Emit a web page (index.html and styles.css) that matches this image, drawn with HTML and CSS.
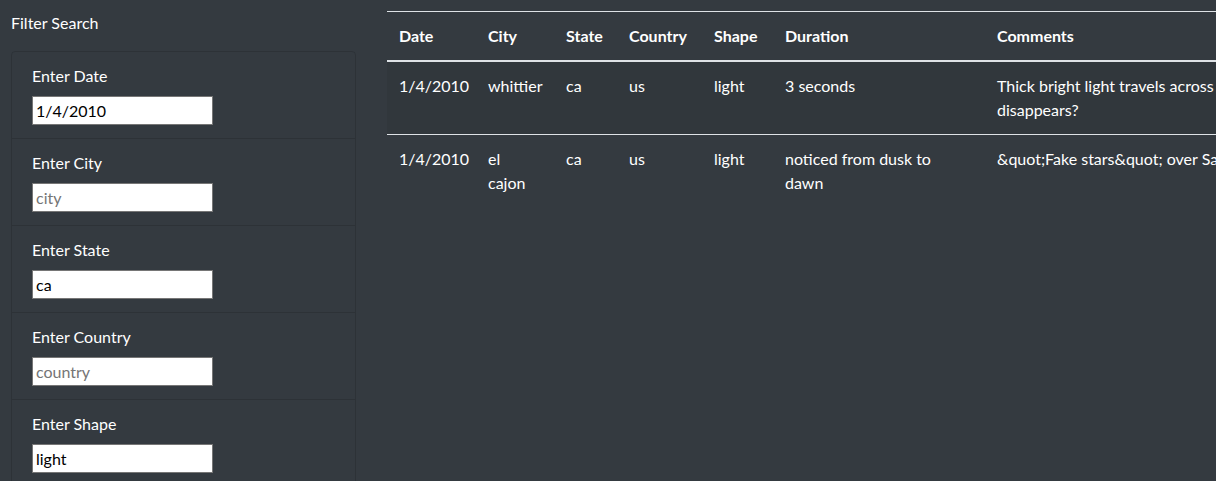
FILE: index.html
```html
<!DOCTYPE html>
<html lang="en">
<head>
<meta charset="utf-8">
<title>UFO Sightings</title>
<link rel="stylesheet" href="styles.css">
</head>
<body>
<div class="page">
  <aside class="sidebar">
    <h2 class="sidebar-title">Filter Search</h2>
    <ul class="filters">
      <li class="filter">
        <label class="filter-label" for="date">Enter Date</label>
        <input class="filter-input" id="date" type="text" value="1/4/2010">
      </li>
      <li class="filter">
        <label class="filter-label" for="city">Enter City</label>
        <input class="filter-input" id="city" type="text" placeholder="city">
      </li>
      <li class="filter">
        <label class="filter-label" for="state">Enter State</label>
        <input class="filter-input" id="state" type="text" value="ca">
      </li>
      <li class="filter">
        <label class="filter-label" for="country">Enter Country</label>
        <input class="filter-input" id="country" type="text" placeholder="country">
      </li>
      <li class="filter">
        <label class="filter-label" for="shape">Enter Shape</label>
        <input class="filter-input" id="shape" type="text" value="light">
      </li>
    </ul>
  </aside>
  <main class="main">
    <table class="table">
      <colgroup>
        <col class="c-date"><col class="c-city"><col class="c-state"><col class="c-country"><col class="c-shape"><col class="c-duration"><col class="c-comments">
      </colgroup>
      <thead>
        <tr>
          <th>Date</th><th>City</th><th>State</th><th>Country</th><th>Shape</th><th>Duration</th><th>Comments</th>
        </tr>
      </thead>
      <tbody>
        <tr class="odd">
          <td>1/4/2010</td><td class="city">whittier</td><td>ca</td><td>us</td><td>light</td><td>3 seconds</td>
          <td>Thick bright light travels across the night sky and then disappears?</td>
        </tr>
        <tr>
          <td>1/4/2010</td><td class="city">el cajon</td><td>ca</td><td>us</td><td>light</td><td>noticed from dusk to dawn</td>
          <td>&amp;quot;Fake stars&amp;quot; over San Diego</td>
        </tr>
      </tbody>
    </table>
  </main>
</div>
</body>
</html>
```
FILE: styles.css
```css
* { box-sizing: border-box; }
html, body {
  margin: 0;
  padding: 0;
  background: #343a40;
  color: #fff;
  font-family: Lato, "Liberation Sans", sans-serif;
  font-size: 16px;
  line-height: 24px;
  overflow: hidden;
}
.page {
  display: flex;
  align-items: flex-start;
  width: 1216px;
  height: 481px;
  overflow: hidden;
}
.sidebar {
  flex: 0 0 345px;
  margin-left: 11px;
  padding-top: 11px;
}
.sidebar-title {
  margin: 0 0 16px;
  font-size: 16px;
  font-weight: 400;
  line-height: 24px;
}
.filters {
  list-style: none;
  margin: 0;
  padding: 0;
  border: 1px solid rgba(0, 0, 0, 0.13);
  border-radius: 4px;
}
.filter {
  display: flex;
  flex-direction: column;
  align-items: flex-start;
  padding: 12px 20px 13px;
  border-bottom: 1px solid rgba(0, 0, 0, 0.13);
}
.filter-label {
  margin-bottom: 8px;
  line-height: 24px;
}
.filter-input {
  width: 181px;
  height: 29px;
  padding: 1px 3px;
  border: 1px solid #767676;
  background: #fff;
  color: #000;
  font-family: inherit;
  font-size: 16px;
}
.filter-input::placeholder { color: #757575; }
.main {
  flex: 0 0 auto;
  margin-left: 31px;
  padding-top: 11px;
}
.table {
  border-collapse: collapse;
  table-layout: fixed;
  width: 1022px;
  color: #fff;
}
.c-date { width: 89px; }
.c-city { width: 78px; }
.c-state { width: 63px; }
.c-country { width: 85px; }
.c-shape { width: 71px; }
.c-duration { width: 212px; }
.c-comments { width: 424px; }
.table th, .table td {
  padding: 12px;
  text-align: left;
  vertical-align: top;
  border-top: 1px solid #dee2e6;
}
.table th {
  font-weight: 700;
  border-bottom: 2px solid #dee2e6;
}
.table td.city { word-spacing: 3px; }
.table tr.odd td { background: rgba(0, 0, 0, 0.05); }
```
